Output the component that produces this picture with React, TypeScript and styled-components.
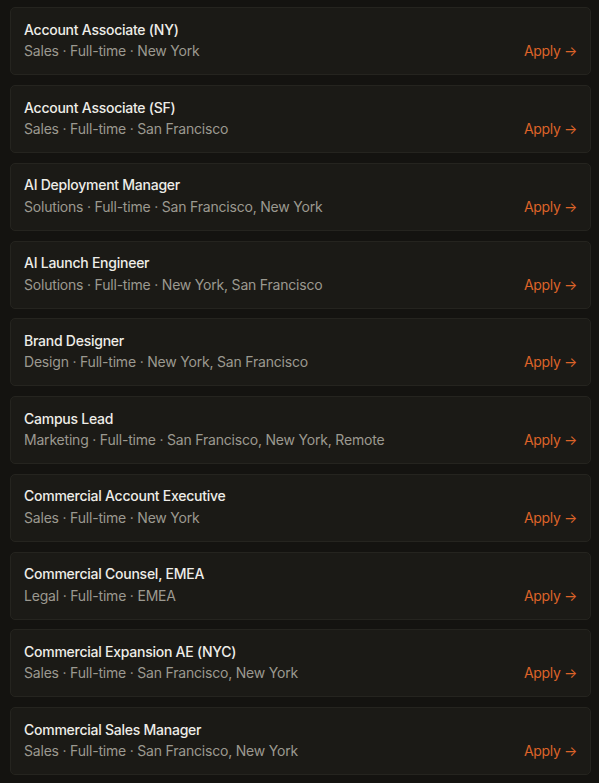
import React from "react";
import styled, { createGlobalStyle } from "styled-components";

const GlobalStyle = createGlobalStyle`
  html, body {
    margin: 0;
    padding: 0;
    background: #141310;
  }
  body {
    font-family: Inter, "Noto Sans", "Liberation Sans", sans-serif;
    -webkit-font-smoothing: antialiased;
  }
`;

const List = styled.ul`
  list-style: none;
  margin: 0;
  padding: 7.3px 8px 0 10px;
  display: flex;
  flex-direction: column;
  gap: 9.75px;
`;

const Card = styled.li`
  display: flex;
  align-items: flex-end;
  justify-content: space-between;
  box-sizing: border-box;
  height: 68px;
  padding: 11.5px 13px 13px 13px;
  background: #1b1a16;
  border: 1px solid #25241f;
  border-radius: 5px;
`;

const Info = styled.div`
  display: flex;
  flex-direction: column;
  align-self: flex-start;
`;

const Title = styled.div`
  font-size: 14px;
  line-height: 20px;
  font-weight: 500;
  letter-spacing: -0.25px;
  color: #eeede8;
`;

const Meta = styled.div`
  margin-top: 0.5px;
  font-size: 14px;
  line-height: 21px;
  letter-spacing: -0.2px;
  color: #9b9990;
`;

const ApplyLink = styled.a`
  font-size: 14px;
  line-height: 21px;
  letter-spacing: -0.35px;
  color: #dd6329;
  text-decoration: none;
  white-space: nowrap;
`;

type Job = { title: string; meta: string[] };

const jobs: Job[] = [
  { title: "Account Associate (NY)", meta: ["Sales", "Full-time", "New York"] },
  { title: "Account Associate (SF)", meta: ["Sales", "Full-time", "San Francisco"] },
  { title: "AI Deployment Manager", meta: ["Solutions", "Full-time", "San Francisco, New York"] },
  { title: "AI Launch Engineer", meta: ["Solutions", "Full-time", "New York, San Francisco"] },
  { title: "Brand Designer", meta: ["Design", "Full-time", "New York, San Francisco"] },
  { title: "Campus Lead", meta: ["Marketing", "Full-time", "San Francisco, New York, Remote"] },
  { title: "Commercial Account Executive", meta: ["Sales", "Full-time", "New York"] },
  { title: "Commercial Counsel, EMEA", meta: ["Legal", "Full-time", "EMEA"] },
  { title: "Commercial Expansion AE (NYC)", meta: ["Sales", "Full-time", "San Francisco, New York"] },
  { title: "Commercial Sales Manager", meta: ["Sales", "Full-time", "San Francisco, New York"] },
];

export default function App() {
  return (
    <>
      <GlobalStyle />
      <List>
        {jobs.map((job) => (
          <Card key={job.title}>
            <Info>
              <Title>{job.title}</Title>
              <Meta>{job.meta.join(" · ")}</Meta>
            </Info>
            <ApplyLink href="#">Apply →</ApplyLink>
          </Card>
        ))}
      </List>
    </>
  );
}
